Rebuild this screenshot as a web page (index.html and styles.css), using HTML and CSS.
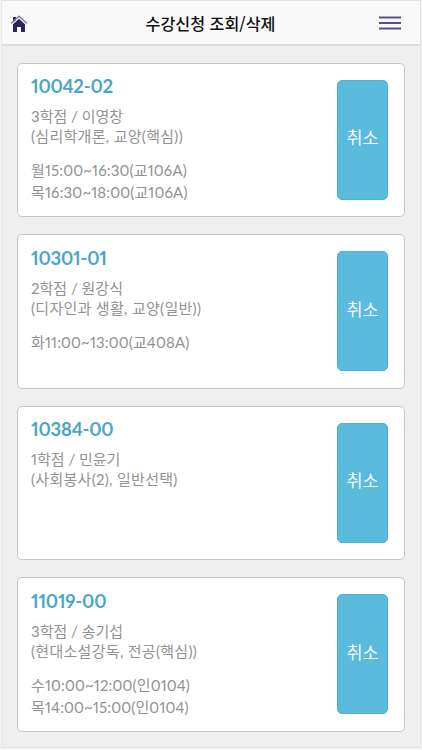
FILE: index.html
```html
<!DOCTYPE html>
<html lang="ko">
<head>
<meta charset="utf-8">
<title>수강신청 조회/삭제</title>
<link rel="stylesheet" href="styles.css">
</head>
<body>
<div class="app">
  <header class="header">
    <svg class="home" width="18" height="18" viewBox="0 0 18 18"><path d="M3 9.2 9 3.8l6 5.4V17h-4v-5H7v5H3z" fill="#30225f"/><path d="M3 2h3v3L3 7.5z" fill="#30225f"/><path d="M1 8.5 9 1.2l8 7.3" fill="none" stroke="#8179a0" stroke-width="1.3"/></svg>
    <h1 class="title">수강신청 조회/삭제</h1>
    <svg class="menu" width="22" height="14" viewBox="0 0 22 14"><path d="M0 1.5h22M0 7h22M0 12.5h22" stroke="#5a4f86" stroke-width="1.8"/></svg>
  </header>
  <main class="list">
    <section class="card">
      <div class="info"><h2 class="code">10042-02</h2>
        <p class="detail"><span>3학점 / 이영창</span><span class="course">(심리학개론, 교양(핵심))</span></p>
        <p class="time"><span>월15:00~16:30(교106A)</span><span>목16:30~18:00(교106A)</span></p></div>
      <button class="cancel">취소</button>
    </section>
    <section class="card">
      <div class="info"><h2 class="code">10301-01</h2>
        <p class="detail"><span>2학점 / 원강식</span><span class="course">(디자인과 생활, 교양(일반))</span></p>
        <p class="time"><span>화11:00~13:00(교408A)</span></p></div>
      <button class="cancel">취소</button>
    </section>
    <section class="card">
      <div class="info"><h2 class="code">10384-00</h2>
        <p class="detail"><span>1학점 / 민윤기</span><span class="course">(사회봉사(2), 일반선택)</span></p></div>
      <button class="cancel">취소</button>
    </section>
    <section class="card">
      <div class="info"><h2 class="code">11019-00</h2>
        <p class="detail"><span>3학점 / 송기섭</span><span class="course">(현대소설강독, 전공(핵심))</span></p>
        <p class="time"><span>수10:00~12:00(인0104)</span><span>목14:00~15:00(인0104)</span></p></div>
      <button class="cancel">취소</button>
    </section>
  </main>
</div>
</body>
</html>
```
FILE: styles.css
```css
* { box-sizing: border-box; }
body { margin: 0; background: #f5f5f5; font-family: Lato, "Noto Sans CJK KR", sans-serif; font-variant-numeric: proportional-nums; }
h1, h2, p { margin: 0; }
.app { height: 748px; margin: 0 1px 2px; border: 1px solid #e2e2e3; border-left-color: #e8e8ea; background: #efefef; overflow: hidden; }
.header { height: 45px; padding: 0 19px 0 8px; display: flex; align-items: center; justify-content: space-between; background: #f9f9f9; border-bottom: 2px solid #dedede; }
.title { margin-left: 14px; font: 500 16.2px/24px "Noto Sans CJK KR", sans-serif; color: #111; }
.home { margin-top: 2px; }
.list { padding: 16.5px 15px 0; display: flex; flex-direction: column; gap: 17px; }
.card { height: 154.5px; border: 1.5px solid #c6c6c6; border-radius: 5px; background: #fff; padding: 10.5px 16px 0 13px; display: flex; justify-content: space-between; }
.code { font-size: 18.5px; line-height: 24px; font-weight: 700; letter-spacing: -.22px; color: #4ba5c7; }
.detail, .time { color: #929292; font-size: 15px; font-weight: 400; white-space: nowrap; }
.detail { margin-top: 8px; line-height: 20px; }
.time { margin-top: 13px; line-height: 22px; letter-spacing: .15px; }
.detail span, .time span { display: block; }
.detail .course { letter-spacing: .3px; }
.cancel { width: 51px; height: 120px; margin-top: 5.5px; padding: 0 0 5px; border: 1px solid #4fb0d1; border-radius: 5px; background: #5bbbdd; color: #fff; font: 350 17.5px/24px "Noto Sans CJK KR", sans-serif; }
```
